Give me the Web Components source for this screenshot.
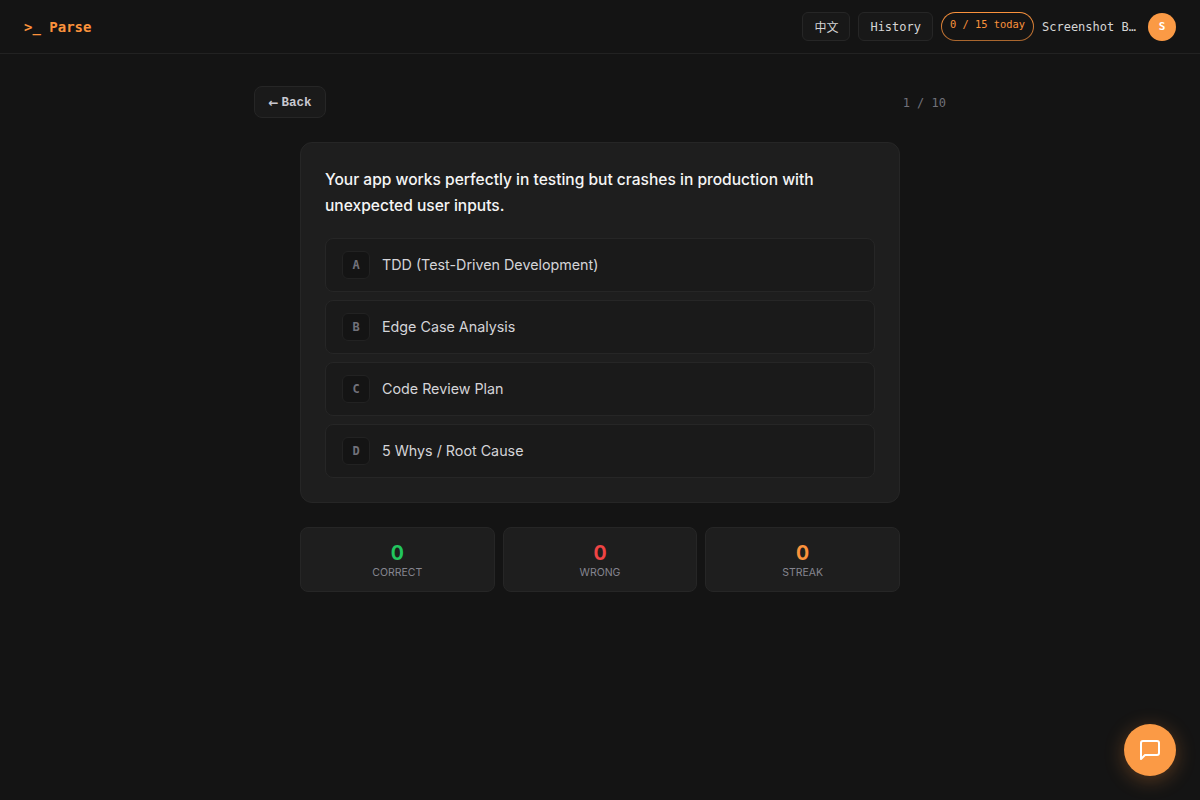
<!DOCTYPE html>
<html>
<head>
<meta charset="utf-8">
<title>Parse</title>
<style>
    html, body { margin: 0; height: 100%; background: #141414; }
    body { font-family: "Inter", "Noto Sans CJK SC", sans-serif; color: #e8e8e8; }
</style>
</head>
<body>
<x-header></x-header>
<x-quiz>
    <x-question text="Your app works perfectly in testing but crashes in production with unexpected user inputs.">
        <x-option letter="A">TDD (Test-Driven Development)</x-option>
        <x-option letter="B">Edge Case Analysis</x-option>
        <x-option letter="C">Code Review Plan</x-option>
        <x-option letter="D">5 Whys / Root Cause</x-option>
    </x-question>
    <x-stats>
        <x-stat value="0" label="CORRECT" color="#22c55e"></x-stat>
        <x-stat value="0" label="WRONG" color="#ef4444"></x-stat>
        <x-stat value="0" label="STREAK" color="#fb923c"></x-stat>
    </x-stats>
</x-quiz>
<x-chat-button></x-chat-button>

<script>
const MONO = '"DejaVu Sans Mono", "Liberation Mono", "Noto Sans CJK SC", monospace';
const html = String.raw;

class Header extends HTMLElement {
    constructor() {
        super();
        this.attachShadow({ mode: 'open' }).innerHTML = html`
            <style>
                :host { display: flex; align-items: center; justify-content: space-between; box-sizing: border-box;
                    height: 54px; padding: 0 24px; border-bottom: 1px solid #222222; font-family: ${MONO}; }
                .logo { color: #fb923c; font-size: 14px; font-weight: 700; white-space: pre; }
                .right { display: flex; align-items: center; gap: 8px; }
                .btn { box-sizing: border-box; height: 29px; padding: 0 11px; display: flex; align-items: center;
                    border: 1px solid #262626; border-radius: 6px; font-size: 12px; color: #d4d4d4; background: #181818; }
                .today { box-sizing: border-box; height: 29px; width: 93px; padding-bottom: 5px; display: flex; align-items: center;
                    justify-content: center; border: 1px solid transparent; border-radius: 15px; font-size: 10.4px; color: #fb923c;
                    background: linear-gradient(#141414, #141414) padding-box, linear-gradient(#fb923c, #a8662e) border-box; }
                .user { width: 98px; font-size: 12px; color: #d4d4d4; }
                .avatar { width: 28px; height: 28px; border-radius: 50%; background: #fb9a45; color: #fff; font-size: 11px;
                    font-weight: 700; display: flex; align-items: center; justify-content: center; }
            </style>
            <div class="logo">&gt;_ Parse</div>
            <div class="right">
                <div class="btn">中文</div>
                <div class="btn">History</div>
                <div class="today">0 / 15 today</div>
                <div class="user">Screenshot B…</div>
                <div class="avatar">S</div>
            </div>
        `;
    }
}

class Quiz extends HTMLElement {
    constructor() {
        super();
        this.attachShadow({ mode: 'open' }).innerHTML = html`
            <style>
                :host { display: block; width: 692px; margin: 0 auto; padding-top: 32px; }
                .top { display: flex; align-items: center; justify-content: space-between; margin-bottom: 24px; }
                .back { box-sizing: border-box; width: 72px; height: 32px; padding-top: 1px; display: flex; align-items: center;
                    justify-content: center; gap: 3px; border: 1px solid #262626; border-radius: 8px; background: #1a1a1a; color: #c8c8d0;
                    font: 700 12.5px "Liberation Mono", monospace; }
                .back span { font: 700 12px "DejaVu Sans", sans-serif; }
                .count { padding-top: 2px; font: 12px ${MONO}; color: #71717a; }
                .body { width: 600px; margin: 0 auto; display: flex; flex-direction: column; gap: 24px; }
            </style>
            <div class="top">
                <div class="back"><span>←</span>Back</div>
                <div class="count">1 / 10</div>
            </div>
            <div class="body"><slot></slot></div>
        `;
    }
}

class Question extends HTMLElement {
    constructor() {
        super();
        this.attachShadow({ mode: 'open' }).innerHTML = html`
            <style>
                :host { display: block; box-sizing: border-box; padding: 24px; background: #1e1e1e;
                    border: 1px solid #262626; border-radius: 12px; }
                p { margin: 0 0 19px; font-size: 15.55px; line-height: 26px; font-weight: 500; color: #f5f5f5; }
                .list { display: flex; flex-direction: column; gap: 8px; }
            </style>
            <p>${this.getAttribute('text')}</p>
            <div class="list"><slot></slot></div>
        `;
    }
}

class Option extends HTMLElement {
    constructor() {
        super();
        this.attachShadow({ mode: 'open' }).innerHTML = html`
            <style>
                :host { display: flex; align-items: center; gap: 12px; box-sizing: border-box; height: 54px; padding: 0 16px;
                    background: #1a1a1a; border: 1px solid #262626; border-radius: 8px; font-size: 14.3px; color: #d4d4d8; }
                .letter { box-sizing: border-box; width: 28px; height: 28px; display: flex; align-items: center; justify-content: center;
                    background: #141414; border: 1px solid #222222; border-radius: 6px; font: 700 12px ${MONO}; color: #71717a; }
                .text { margin-bottom: 2px; }
            </style>
            <div class="letter">${this.getAttribute('letter')}</div>
            <div class="text"><slot></slot></div>
        `;
    }
}

class Stats extends HTMLElement {
    constructor() {
        super();
        this.attachShadow({ mode: 'open' }).innerHTML = html`
            <style>
                :host { display: grid; grid-template-columns: repeat(3, 1fr); gap: 8px; }
            </style>
            <slot></slot>
        `;
    }
}

class Stat extends HTMLElement {
    constructor() {
        super();
        this.attachShadow({ mode: 'open' }).innerHTML = html`
            <style>
                :host { display: flex; flex-direction: column; align-items: center; box-sizing: border-box; height: 65px;
                    padding-top: 13px; background: #1e1e1e; border: 1px solid #262626; border-radius: 8px; }
                .value { font-size: 19.5px; line-height: 24px; font-weight: 700; color: ${this.getAttribute('color')}; }
                .label { font-size: 10.5px; line-height: 14px; margin-top: 1px; color: #85858f; }
            </style>
            <div class="value">${this.getAttribute('value')}</div>
            <div class="label">${this.getAttribute('label')}</div>
        `;
    }
}

class ChatButton extends HTMLElement {
    constructor() {
        super();
        this.attachShadow({ mode: 'open' }).innerHTML = html`
            <style>
                :host { position: fixed; right: 24px; bottom: 24px; width: 52px; height: 52px; border-radius: 50%;
                    background: #fb9a45; display: flex; align-items: center; justify-content: center;
                    box-shadow: 0 4px 20px rgba(251, 146, 60, 0.3); }
            </style>
            <svg width="24" height="24" viewBox="0 0 24 24" fill="none" stroke="#fff" stroke-width="2" stroke-linejoin="round" stroke-linecap="round">
                <path d="M21 15a2 2 0 0 1-2 2H7l-4 4V5a2 2 0 0 1 2-2h14a2 2 0 0 1 2 2z"/>
            </svg>
        `;
    }
}

customElements.define('x-header', Header);
customElements.define('x-quiz', Quiz);
customElements.define('x-question', Question);
customElements.define('x-option', Option);
customElements.define('x-stats', Stats);
customElements.define('x-stat', Stat);
customElements.define('x-chat-button', ChatButton);
</script>
</body>
</html>
